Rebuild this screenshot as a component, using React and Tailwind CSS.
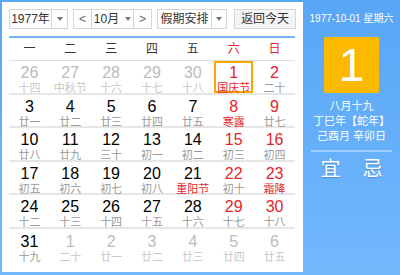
import React from "react";

const weeks = [
  [
    ["26", "十四", "o"],
    ["27", "中秋节", "o"],
    ["28", "十六", "o"],
    ["29", "十七", "o"],
    ["30", "十八", "o"],
    ["1", "国庆节", "today"],
    ["2", "二十", "w"],
  ],
  [
    ["3", "廿一"],
    ["4", "廿二"],
    ["5", "廿三"],
    ["6", "廿四"],
    ["7", "廿五"],
    ["8", "寒露", "wf"],
    ["9", "廿七", "w"],
  ],
  [
    ["10", "廿八"],
    ["11", "廿九"],
    ["12", "三十"],
    ["13", "初一"],
    ["14", "初二"],
    ["15", "初三", "w"],
    ["16", "初四", "w"],
  ],
  [
    ["17", "初五"],
    ["18", "初六"],
    ["19", "初七"],
    ["20", "初八"],
    ["21", "重阳节", "f"],
    ["22", "初十", "w"],
    ["23", "霜降", "wf"],
  ],
  [
    ["24", "十二"],
    ["25", "十三"],
    ["26", "十四"],
    ["27", "十五"],
    ["28", "十六"],
    ["29", "十七", "w"],
    ["30", "十八", "w"],
  ],
  [
    ["31", "十九"],
    ["1", "二十", "o"],
    ["2", "廿一", "o"],
    ["3", "廿二", "o"],
    ["4", "廿三", "o"],
    ["5", "廿四", "o"],
    ["6", "廿五", "o"],
  ],
];

const Caret = () => (
  <span className="w-0 h-0 border-l-[3px] border-r-[3px] border-t-[4px] border-l-transparent border-r-transparent border-t-[#777]" />
);

const DayCell = ({ day }) => {
  const [num, lunar, kind = ""] = day;
  const other = kind === "o";
  const weekend = kind.includes("w") || kind === "today";
  const fest = kind.includes("f") || kind === "today";
  const numColor = other ? "text-[#bbbbbb]" : weekend ? "text-[#e3262c]" : "text-black";
  const lunarColor = other ? "text-[#c8c8c8]" : fest ? "text-[#e3262c]" : "text-[#999999]";
  return (
    <div className="flex justify-center">
      <div
        className={`flex flex-col items-center w-[39px] h-[32px] ${
          kind === "today" ? "border-2 border-[#f7a800]" : "border-2 border-transparent"
        }`}
      >
        <span className={`text-[16px] leading-[18px] mt-[1px] ${numColor}`}>{num}</span>
        <span className={`text-[11px] leading-[13px] ${lunarColor}`}>{lunar}</span>
      </div>
    </div>
  );
};

export default function App() {
  return (
    <div
      className="w-[400px] h-[275px] flex bg-gradient-to-b from-[#58a6f6] to-[#72b8fd]"
      style={{ fontFamily: '"Liberation Sans", Arial, "Noto Sans CJK SC", sans-serif' }}
    >
      <div className="w-[301px] h-[270px] mt-[2px] ml-[2px] bg-white pl-[7px] pt-[7px]">
        <div className="flex items-center h-[20px] text-[12px] text-[#333]">
          <div className="flex h-[20px] w-[59px] border border-[#d5d5d5]">
            <span className="w-[41px] flex items-center justify-center">1977年</span>
            <span className="flex-1 flex items-center justify-center border-l border-[#d5d5d5]">
              <Caret />
            </span>
          </div>
          <div className="flex h-[20px] w-[79px] ml-[5px] border border-[#d5d5d5]">
            <span className="w-[17px] flex items-center justify-center text-[#666]">&lt;</span>
            <span className="flex-1 flex items-center justify-center gap-[6px] border-l border-r border-[#d5d5d5]">
              10月 <Caret />
            </span>
            <span className="w-[17px] flex items-center justify-center text-[#666]">&gt;</span>
          </div>
          <div className="flex h-[20px] w-[70px] ml-[5px] border border-[#d5d5d5]">
            <span className="w-[53px] flex items-center justify-center">假期安排</span>
            <span className="flex-1 flex items-center justify-center border-l border-[#d5d5d5]">
              <Caret />
            </span>
          </div>
          <div className="flex items-center justify-center h-[20px] w-[62px] ml-[7px] border border-[#d5d5d5] bg-[#f4f4f4]">
            返回今天
          </div>
        </div>
        <div className="w-[286px] mt-[7px] h-[2px] bg-[#72b4f4]" />
        <div className="w-[286px] grid grid-cols-7 h-[23px] items-center text-[12px] text-[#333] border-b border-[#dddddd]">
          {["一", "二", "三", "四", "五", "六", "日"].map((d, i) => (
            <span key={d} className={`text-center ${i > 4 ? "text-[#e3262c]" : ""}`}>
              {d}
            </span>
          ))}
        </div>
        <div className="w-[286px]">
          {weeks.map((week, r) => (
            <div
              key={r}
              className={`grid grid-cols-7 h-[33.6px] items-center ${
                r < 5 ? "border-b-2 border-[#e6e6e6]" : ""
              }`}
            >
              {week.map((day, c) => (
                <DayCell key={c} day={day} />
              ))}
            </div>
          ))}
        </div>
      </div>
      <div className="flex-1 flex flex-col items-center text-white pt-[12px]">
        <div className="text-[10px] leading-[14px]">1977-10-01 星期六</div>
        <div className="mt-[11px] w-[55px] h-[56px] rounded-[2px] bg-[#fdb800] flex items-center justify-center text-[46px] leading-none">
          1
        </div>
        <div className="mt-[6px] text-[11px] leading-[15px] text-center">
          <div>八月十九</div>
          <div>丁巳年【蛇年】</div>
          <div>己酉月 辛卯日</div>
        </div>
        <div className="mt-[6px] w-[81px] h-[2px] bg-[#9bcdfd]" />
        <div className="mt-[5px] flex gap-[22px] text-[20px] leading-[24px] [text-shadow:0_1px_1px_rgba(0,0,0,0.2)]">
          <span>宜</span>
          <span>忌</span>
        </div>
      </div>
    </div>
  );
}
